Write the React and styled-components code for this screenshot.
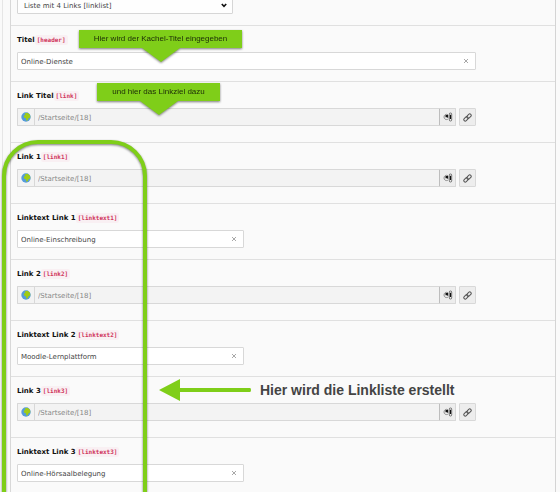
import React from 'react';
import styled, { createGlobalStyle } from 'styled-components';

const GlobalStyle = createGlobalStyle`
  * {
    box-sizing: border-box;
  }

  body {
    margin: 0;
    overflow: hidden;
    background: #fafafa;
    font-family: "DejaVu Sans", Verdana, sans-serif;
    font-size: 7px;
  }
`;

const Page = styled.main`
  position: relative;
  overflow: hidden;
  min-height: 100vh;
  padding: 0 4px 0 2px;
`;

const TabPane = styled.div`
  padding-left: 7px;
  border-left: 1px solid #e6e6e6;
`;

const Form = styled.form`
  border-left: 1px solid #d8d8d8;
  border-right: 1px solid #d4d4d4;
`;

const FormSection = styled.section`
  padding: 8px 79px ${({ $spacious }) => ($spacious ? '16px' : '11px')} 6px;
  border-top: 1px solid #e0e0e0;
`;

const TypeSection = styled.section`
  margin-top: -4px;
  padding: 0 79px 11px 6px;
`;

const FieldLabel = styled.label`
  display: flex;
  align-items: center;
  height: 12px;
  margin-bottom: 6px;
  color: #111;
  font-weight: 700;
`;

const FieldName = styled.code`
  padding: 1px 2px;
  border-radius: 2px;
  background: #f9f0f3;
  color: #d0355c;
  font-family: "DejaVu Sans Mono", monospace;
  font-size: 6px;
  line-height: 8px;
`;

const SelectBox = styled.div`
  position: relative;
  width: 47%;

  svg {
    position: absolute;
    top: 7px;
    right: 6px;
    pointer-events: none;
  }
`;

const Select = styled.select`
  display: block;
  width: 100%;
  height: 18px;
  padding: 1px 6px 0;
  appearance: none;
  border: 1px solid #d6d6d6;
  border-radius: 1px;
  background: #fefefe;
  color: #444;
  font: inherit;
`;

const InputBox = styled.div`
  display: flex;
  align-items: center;
  width: ${({ $wide }) => ($wide ? '100%' : 'calc(50% - 3px)')};
  height: 18px;
  padding: 0 6px 0 3px;
  border: 1px solid #d8d8d8;
  border-radius: 1px;
  background: #fff;
`;

const TextInput = styled.input`
  flex: 1;
  min-width: 0;
  padding: 1px 0 0;
  border: 0;
  outline: 0;
  background: transparent;
  color: #444;
  font: inherit;
`;

const ClearButton = styled.button`
  display: flex;
  padding: 0;
  border: 0;
  background: transparent;
  color: #a8a8a8;
`;

const LinkRow = styled.div`
  display: flex;
  height: 18px;
`;

const LinkBox = styled.div`
  display: flex;
  flex: 1;
  min-width: 0;
  border: 1px solid #d8d8d8;
  border-right: 0;
  border-radius: 1px 0 0 1px;
  background: #f3f3f3;
`;

const GlobeAddon = styled.span`
  display: flex;
  align-items: center;
  justify-content: center;
  width: 17px;
  border-right: 1px solid #d8d8d8;
`;

const LinkInput = styled(TextInput)`
  padding-left: 3px;
  color: #888;
`;

const IconButton = styled.button`
  display: flex;
  align-items: center;
  justify-content: center;
  width: 17px;
  height: 18px;
  margin-left: ${({ $apart }) => ($apart ? '3px' : '0')};
  padding: 0;
  border: 1px solid #d8d8d8;
  border-left-color: ${({ $apart }) => ($apart ? '#d8d8d8' : '#bdbdbd')};
  border-radius: 1px;
  background: #ededed;
`;

const Callout = styled.div`
  position: absolute;
  top: ${({ $top }) => $top}px;
  left: ${({ $left }) => $left}px;
  width: ${({ $width }) => $width}px;
  height: 18px;
  background: #7fce19;
  color: #1c2c08;
  font-family: "Liberation Sans", Arial, sans-serif;
  font-size: 8px;
  line-height: 17px;
  text-align: center;
  filter: drop-shadow(0 1px 1px rgba(0, 0, 0, 0.5));

  &::after {
    content: '';
    position: absolute;
    top: 100%;
    left: 50%;
    margin-left: -19px;
    border: 19px solid transparent;
    border-top: 14px solid #7fce19;
    border-bottom: 0;
  }
`;

const Frame = styled.div`
  position: absolute;
  top: 140px;
  bottom: -60px;
  left: 2px;
  width: 145px;
  border: 4px solid #7fce19;
  border-radius: 36px;
  filter: drop-shadow(0 1px 1px rgba(0, 0, 0, 0.5));
  pointer-events: none;
`;

const ArrowNote = styled.div`
  position: absolute;
  top: 378px;
  left: 158px;
  display: flex;
  align-items: center;
  gap: 8px;
  color: #444;
  font-family: "Liberation Sans", Arial, sans-serif;
  font-size: 14px;
  font-weight: 700;
  line-height: 24px;
  white-space: nowrap;
`;

const Chevron = () => (
  <svg width="6" height="5" viewBox="0 0 6 5" fill="none" stroke="#111" strokeWidth="1.6">
    <path d="M0.8 1 3 3.4 5.2 1" />
  </svg>
);

const Cross = () => (
  <svg width="6" height="6" viewBox="0 0 6 6" stroke="currentColor" strokeWidth="1">
    <path d="M1 1 5 5M5 1 1 5" />
  </svg>
);

const Globe = () => (
  <svg width="10" height="10" viewBox="0 0 10 10">
    <circle cx="5" cy="5" r="4.7" fill="#559bdc" />
    <path d="M3.6 1.4 6.4.8 8.8 2.6 9.4 5.2 7.4 6.4 6.8 8.3 5.4 8.8 5 6.4 3 5.6 2.8 3.6 4.4 3Z" fill="#a0cc14" />
  </svg>
);

const ToggleIcon = () => (
  <svg width="10" height="10" viewBox="0 0 10 10" fill="none">
    <path d="M5 2.6C2.9 1.7 1 3 1 5S2.8 8 4.8 7.4" stroke="#777" strokeWidth="0.8" />
    <path d="M2.5 3H5.2V6.5L4.2 5.3H2.5Z" fill="#111" />
    <rect x="6.3" y="1" width="2.4" height="8" rx="1.1" stroke="#555" strokeWidth="0.8" />
    <path d="M7.5 2.8V7" stroke="#111" strokeWidth="1.1" />
  </svg>
);

const ChainIcon = () => (
  <svg width="9" height="9" viewBox="0 0 8 8" fill="none" stroke="#555" strokeWidth="0.9">
    <rect x="-1.3" y="-2.4" width="2.6" height="4.4" rx="1.3" transform="translate(5.2 2.9) rotate(45)" />
    <rect x="-1.3" y="-2" width="2.6" height="4.4" rx="1.3" transform="translate(2.8 5.1) rotate(45)" />
  </svg>
);

const ArrowLeft = () => (
  <svg width="94" height="24" viewBox="0 0 94 24">
    <path d="M1 12 22 1V10H92Q93 10 93 12T92 14H22V23Z" fill="#7fce19" />
  </svg>
);

const fields = [
  { name: 'header', label: 'Titel', value: 'Online-Dienste', wide: true },
  { name: 'link', label: 'Link Titel', isLink: true },
  { name: 'link1', label: 'Link 1', isLink: true },
  { name: 'linktext1', label: 'Linktext Link 1', value: 'Online-Einschreibung' },
  { name: 'link2', label: 'Link 2', isLink: true },
  { name: 'linktext2', label: 'Linktext Link 2', value: 'Moodle-Lernplattform' },
  { name: 'link3', label: 'Link 3', isLink: true },
  { name: 'linktext3', label: 'Linktext Link 3', value: 'Online-Hörsaalbelegung' },
];

const LinkField = ({ id }) => (
  <LinkRow>
    <LinkBox>
      <GlobeAddon>
        <Globe />
      </GlobeAddon>
      <LinkInput id={id} defaultValue="/Startseite/[18]" readOnly />
    </LinkBox>
    <IconButton type="button" aria-label="Ansicht umschalten">
      <ToggleIcon />
    </IconButton>
    <IconButton type="button" aria-label="Link auswählen" $apart>
      <ChainIcon />
    </IconButton>
  </LinkRow>
);

const TextField = ({ id, value, wide }) => (
  <InputBox $wide={wide}>
    <TextInput id={id} defaultValue={value} />
    <ClearButton type="button" aria-label="Feld leeren">
      <Cross />
    </ClearButton>
  </InputBox>
);

const App = () => {
  return (
    <>
      <GlobalStyle />
      <Page>
        <TabPane>
          <Form>
            <TypeSection>
              <SelectBox>
                <Select defaultValue="linklist" aria-label="Typ">
                  <option value="linklist">Liste mit 4 Links [linklist]</option>
                </Select>
                <Chevron />
              </SelectBox>
            </TypeSection>

            {fields.map(({ name, label, value, wide, isLink }) => (
              <FormSection key={name} $spacious={isLink}>
                <FieldLabel htmlFor={name}>
                  {label}
                  <FieldName>[{name}]</FieldName>
                </FieldLabel>
                {isLink ? <LinkField id={name} /> : <TextField id={name} value={value} wide={wide} />}
              </FormSection>
            ))}
          </Form>
        </TabPane>

        <Callout $top={30} $left={79} $width={163}>Hier wird der Kachel-Titel eingegeben</Callout>
        <Callout $top={83} $left={97} $width={123}>und hier das Linkziel dazu</Callout>
        <Frame />
        <ArrowNote>
          <ArrowLeft />
          Hier wird die Linkliste erstellt
        </ArrowNote>
      </Page>
    </>
  );
};

export default App;
